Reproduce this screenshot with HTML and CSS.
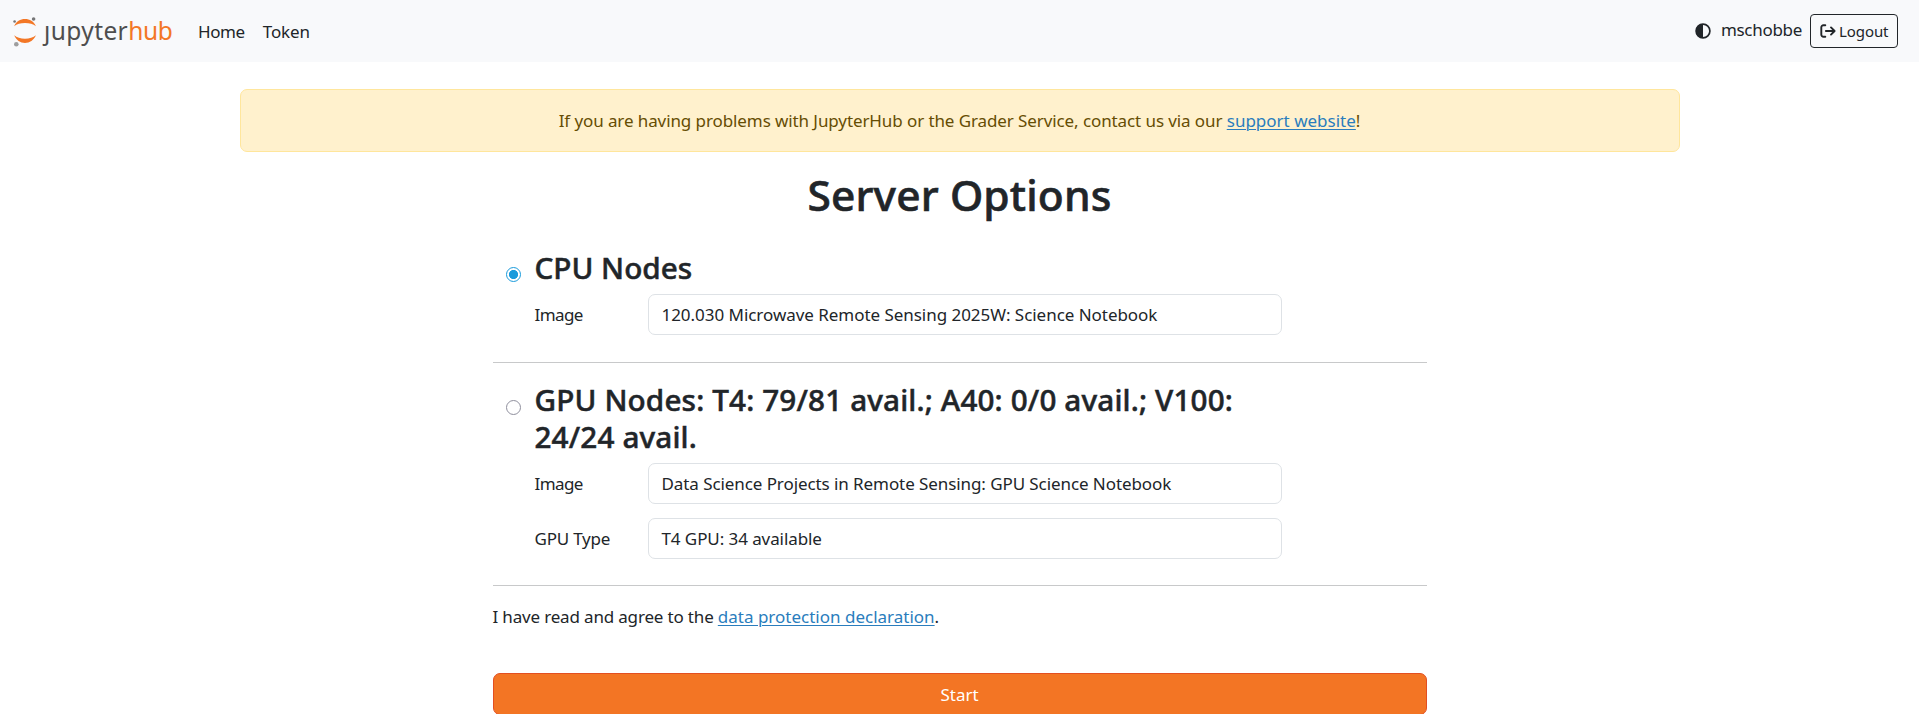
FILE: index.html
```html
<!DOCTYPE html>
<html lang="en">
<head>
<meta charset="utf-8">
<title>JupyterHub</title>
<link rel="stylesheet" href="styles.css">
</head>
<body>
<nav class="navbar">
  <a class="brand">
    <svg class="brand-mark" width="24" height="32" viewBox="0 0 24 32">
      <path d="M1.200 10.200C3.200 5.400 7.300 3 12 3s8.900 2.400 10.900 7.200C20.300 8 16.500 6.900 12 6.900S3.700 8 1.200 10.200z" fill="#f37726"/>
      <path d="M1.200 19.200C3.200 24 7.300 26.900 12 26.900s8.900-2.900 10.900-7.700C20.300 21.500 16.500 22.700 12 22.700s-8.300-1.200-10.800-3.500z" fill="#f37726"/>
      <circle cx="20.600" cy="3" r="1.800" fill="#767677"/>
      <circle cx="1.600" cy="5.500" r="1.300" fill="#767677"/>
      <circle cx="3.300" cy="28.300" r="2.300" fill="#9e9e9e"/>
    </svg>
    <span class="brand-text"><span class="brand-jupyter">ȷupyter</span><span class="brand-hub">hub</span></span>
  </a>
  <a class="nav-link home">Home</a>
  <a class="nav-link">Token</a>
  <div class="nav-right">
    <svg class="theme" width="16" height="16" viewBox="0 0 16 16">
      <circle cx="8" cy="8" r="6.900" fill="none" stroke="#212529" stroke-width="1.700"/>
      <path d="M8 1a7 7 0 0 0 0 14z" fill="#212529"/>
    </svg>
    <span class="user">mschobbe</span>
    <a class="logout">
      <svg width="16" height="14" viewBox="0 0 16 14" fill="none" stroke="#212529" stroke-width="1.900" stroke-linecap="round" stroke-linejoin="round">
        <path d="M5.300 1.300H3.400A2.100 2.100 0 0 0 1.300 3.400v7.200a2.100 2.100 0 0 0 2.100 2.100h1.900M5.900 7H14.300M11 3.400 14.600 7 11 10.600"/>
      </svg>
      <span>Logout</span>
    </a>
  </div>
</nav>
<div class="alert"><span>If you are having problems with JupyterHub or the Grader Service, contact us via our <a class="link">support website</a>!</span></div>
<main class="content">
  <h1 class="title">Server Options</h1>
  <section class="option cpu">
    <span class="radio checked"></span>
    <div class="option-body">
      <h3 class="heading">CPU Nodes</h3>
      <div class="field"><label class="label tight">Image</label><div class="select science">120.030 Microwave Remote Sensing 2025W: Science Notebook</div></div>
    </div>
  </section>
  <section class="option gpu">
    <span class="radio"></span>
    <div class="option-body">
      <h3 class="heading">GPU Nodes: T4: 79/81 avail.; A40: 0/0 avail.; V100:<br>24/24 avail.</h3>
      <div class="field"><label class="label tight">Image</label><div class="select">Data Science Projects in Remote Sensing: GPU Science Notebook</div></div>
      <div class="field"><label class="label">GPU Type</label><div class="select">T4 GPU: 34 available</div></div>
    </div>
  </section>
  <p class="agree">I have read and agree to the <a class="link">data protection declaration</a>.</p>
  <button class="start">Start</button>
</main>
</body>
</html>
```

FILE: styles.css
```css
* { box-sizing: border-box; }
html { overflow: hidden; }
body {
  margin: 0;
  height: 714px;
  overflow: hidden;
  background: #fff;
  color: #212529;
  font: 17px/26px "Noto Sans", sans-serif;
  letter-spacing: -0.08px;
}
.navbar {
  display: flex;
  align-items: center;
  height: 62px;
  padding: 0 21px 0 12px;
  background: #f8f9fb;
}
.brand { display: flex; align-items: center; width: 186px; }
.brand-mark { margin: 2px 7px 0 1px; }
.brand-text { font-size: 24.5px; line-height: 32px; margin-top: -1px; white-space: nowrap; }
.brand-jupyter { color: #4e4e4e; letter-spacing: 0.4px; }
.brand-hub { color: #f37726; letter-spacing: -0.3px; }
.nav-link { letter-spacing: -0.1px; margin-top: 1px; }
.home { margin-right: 18px; letter-spacing: -0.4px; }
.nav-right { display: flex; align-items: center; margin-left: auto; }
.theme { margin-right: 10px; }
.user { letter-spacing: -0.3px; margin: -3px 8px 0 0; }
.logout {
  display: flex;
  align-items: center;
  gap: 3px;
  width: 88px;
  height: 34px;
  padding-left: 9px;
  border: 1px solid #212529;
  border-radius: 4px;
  font-size: 15px;
  line-height: 24px;
}
.alert {
  width: 1440px;
  height: 63px;
  margin: 27px auto 0;
  padding: 18px 0;
  border: 1px solid #ffe69c;
  border-radius: 7px;
  background: #fff1cd;
  color: #664d03;
  letter-spacing: -0.095px;
  text-align: center;
}
.link {
  color: #2a7dbd;
  letter-spacing: 0;
  text-decoration: underline;
  text-decoration-thickness: 1px;
  text-underline-offset: 2px;
}
.content { width: 934px; margin: 17px auto 0; }
.title {
  margin: 0 0 26px;
  font-size: 42.5px;
  font-weight: 500;
  line-height: 52px;
  letter-spacing: 0.12px;
  text-align: center;
  -webkit-text-stroke: 0.6px #212529;
}
.option {
  display: flex;
  align-items: flex-start;
  padding-left: 13px;
  border-bottom: 1px solid #c8c9ca;
}
.cpu { height: 116px; }
.gpu { height: 223px; padding-top: 17px; }
.radio {
  flex: none;
  width: 15px;
  height: 15px;
  margin: 20px 14px 0 0;
  border: 1px solid #8f8f9d;
  border-radius: 50%;
  background: #fff;
}
.checked {
  border-color: #1a9bdc;
  background: radial-gradient(circle, #1a9bdc 4.200px, #fff 5px);
}
.option-body { width: 747px; }
.heading {
  margin: 1px 0 8px;
  font-size: 29.7px;
  font-weight: 500;
  line-height: 37px;
  letter-spacing: 0.14px;
  white-space: nowrap;
  -webkit-text-stroke: 0.5px #212529;
}
.cpu .heading { margin: 2px 0 8px; letter-spacing: 0; }
.field { display: flex; align-items: center; margin-bottom: 14px; }
.label { width: 113px; letter-spacing: -0.2px; }
.tight { letter-spacing: -0.6px; }
.select {
  width: 634px;
  height: 41px;
  padding: 7px 13px;
  border: 1px solid #dee2e6;
  border-radius: 7px;
  background: #fff;
}
.science { letter-spacing: -0.04px; }
.agree { margin: 18px 0 43px; letter-spacing: -0.17px; }
.start {
  display: block;
  width: 100%;
  height: 42px;
  padding: 1px 0 0;
  border: 1px solid #e34f21;
  border-radius: 7px;
  background: #f37524;
  color: #fff;
  font: inherit;
}
```
